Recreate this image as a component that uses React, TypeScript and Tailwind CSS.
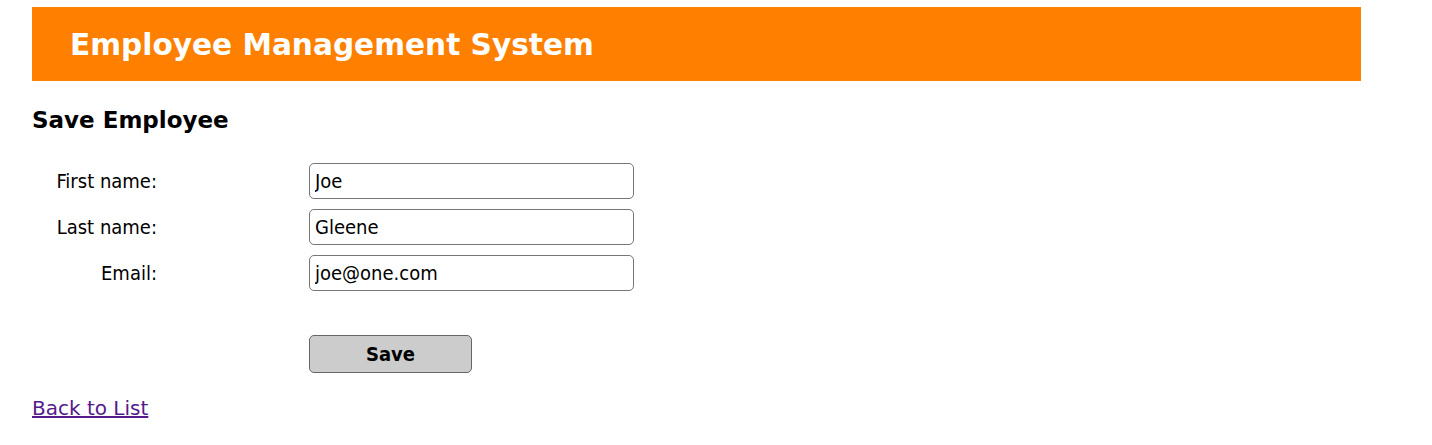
const font = 'font-[Tahoma,"DejaVu_Sans_Condensed","DejaVu_Sans",sans-serif]'
const wide = 'font-[Tahoma,"DejaVu_Sans",sans-serif]'

const fields = [
  { label: 'First name:', value: 'Joe' },
  { label: 'Last name:', value: 'Gleene' },
  { label: 'Email:', value: 'joe@one.com' },
]

export default function App() {
  return (
    <div className={`${font} bg-white text-black min-h-[445px] pt-[7px] pl-[32px]`}>
      <div className="w-[1329px] h-[74px] bg-[#ff8000] flex items-center pl-[38px] pt-[3px]">
        <h1 className={`${wide} text-[29.6px] font-bold text-white`}>Employee Management System</h1>
      </div>
      <h2 className={`${wide} text-[23px] font-bold mt-[24px] leading-[30px]`}>Save Employee</h2>
      <div className="mt-[28px] flex flex-col gap-[10px]">
        {fields.map((f) => (
          <div key={f.label} className="flex items-center">
            <label className="w-[125px] text-right text-[20px]">{f.label}</label>
            <input
              defaultValue={f.value}
              className={`${font} ml-[152px] w-[325px] h-[36px] border border-[#767676] rounded-[5px] px-[5px] text-[20px] outline-none`}
            />
          </div>
        ))}
      </div>
      <button
        className={`${font} ml-[277px] mt-[44px] w-[163px] h-[38px] bg-[#cccccc] border border-[#666] rounded-[5px] text-[20px] font-bold`}
      >
        Save
      </button>
      <div className="mt-[20px]">
        <a href="#" className={`${wide} text-[20px] text-[#551a8b] underline`}>Back to List</a>
      </div>
    </div>
  )
}
